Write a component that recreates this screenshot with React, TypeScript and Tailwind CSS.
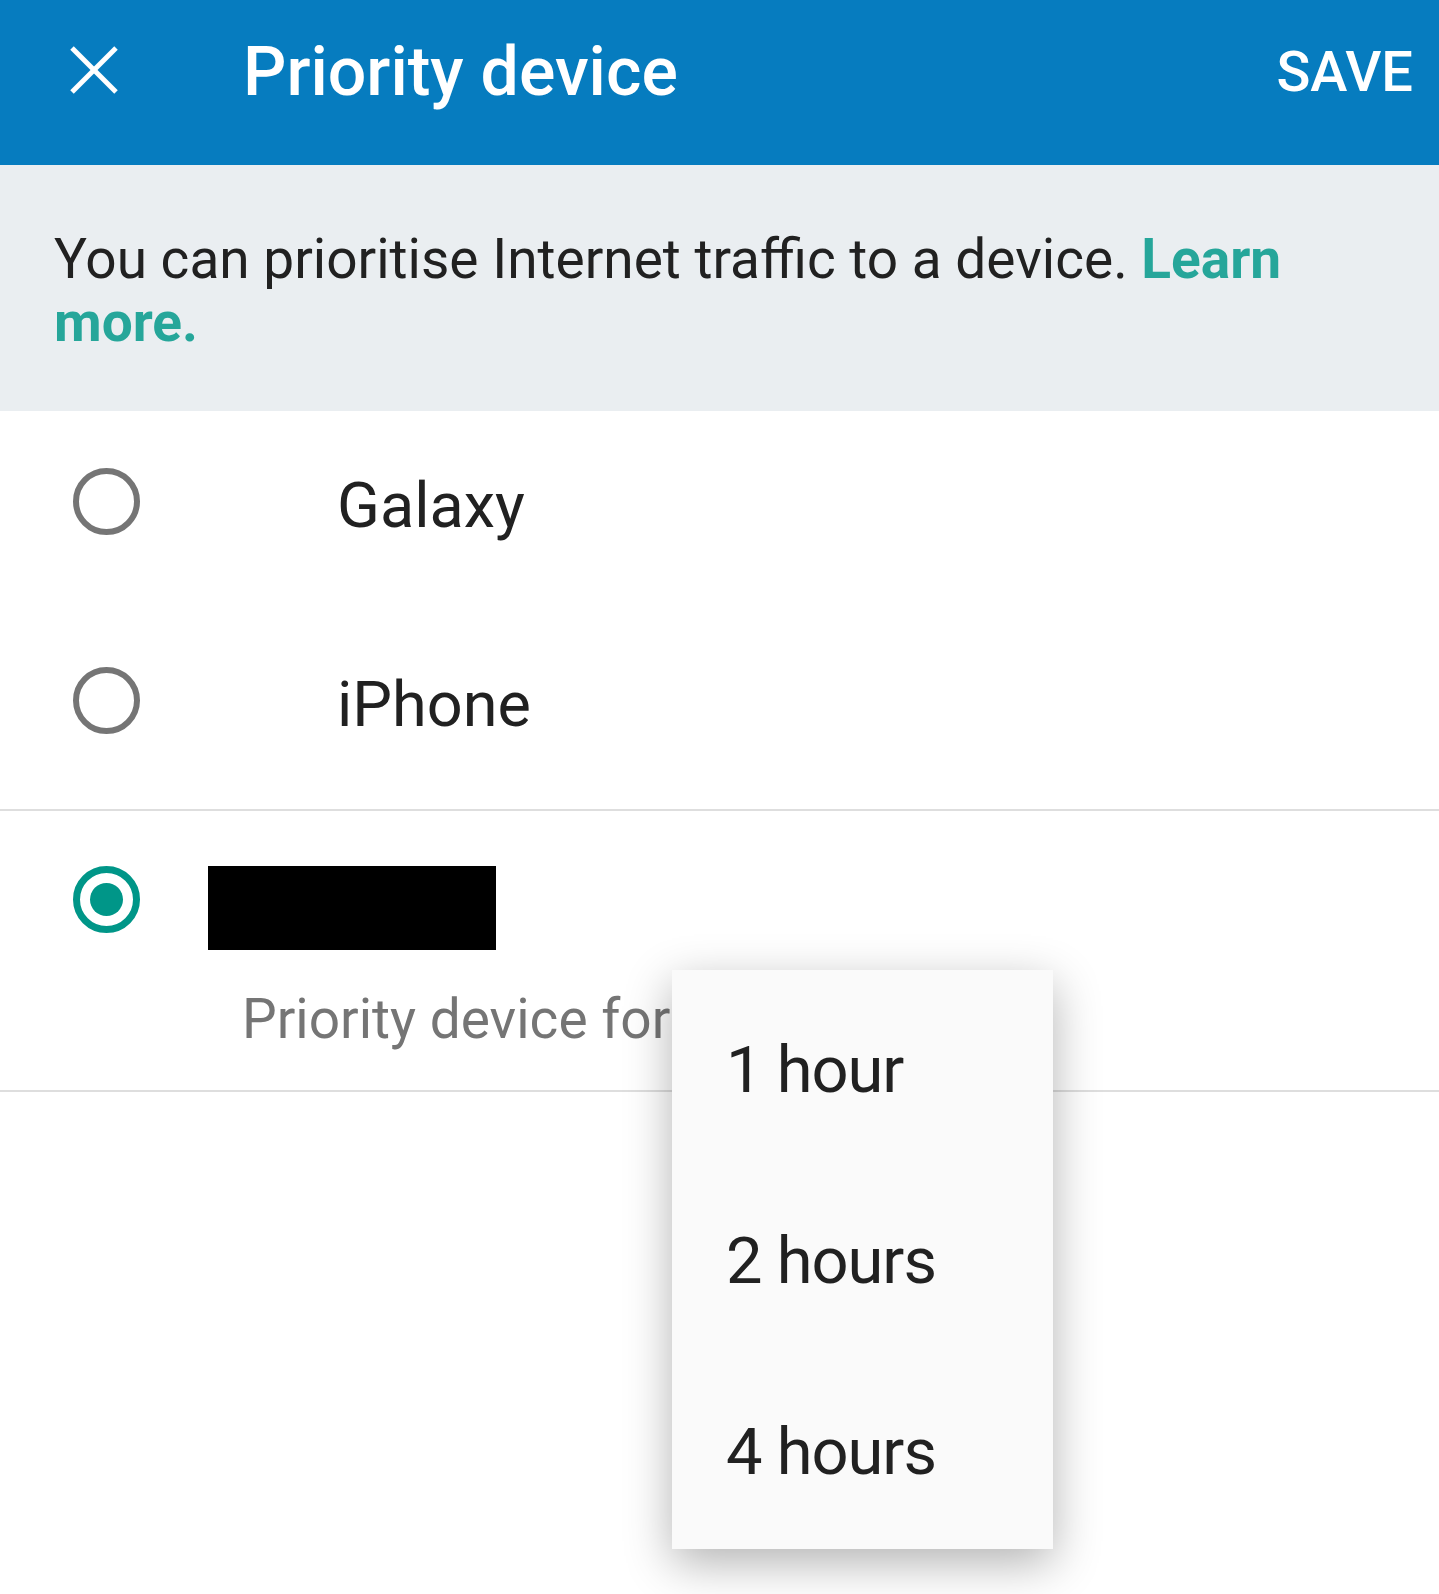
export default function App() {
  return (
    <div className="relative min-h-[1594px] bg-white font-[family-name:Roboto,sans-serif] text-[#212121]">
      {/* app bar */}
      <header className="flex h-[165px] items-start bg-[#067cbf] text-white">
        <svg
          className="ml-[70px] mt-[46px] h-[48px] w-[48px] shrink-0"
          viewBox="0 0 48 48"
          fill="none"
          stroke="white"
          strokeWidth="5"
        >
          <line x1="2" y1="2" x2="46" y2="46" />
          <line x1="46" y1="2" x2="2" y2="46" />
        </svg>
        <h1 className="ml-[125px] mt-[38px] text-[68px] font-medium leading-none">Priority device</h1>
        <button className="ml-auto mr-[26px] mt-[44px] text-[56px] font-medium leading-none">SAVE</button>
      </header>

      {/* info banner */}
      <div className="bg-[#eaeef1] pb-[57px] pl-[54px] pr-[54px] pt-[63px] text-[55px] leading-[63px]">
        You can prioritise Internet traffic to a device.{" "}
        <a className="font-bold text-[#26a69a]">Learn more.</a>
      </div>

      {/* devices */}
      <div className="flex flex-col gap-[132px] pb-[75px] pt-[57px]">
        {["Galaxy", "iPhone"].map((name) => (
          <div key={name} className="flex h-[67px] items-start">
            <span className="ml-[73px] h-[67px] w-[67px] shrink-0 rounded-full border-[6px] border-[#757575]" />
            <span className="ml-[197px] mt-[6px] text-[63px] leading-none">{name}</span>
          </div>
        ))}
      </div>
      <div className="h-[2px] bg-[#dedede]" />

      <div className="pb-[43px] pt-[55px]">
        <div className="flex items-start">
          <span className="ml-[73px] flex h-[67px] w-[67px] shrink-0 items-center justify-center rounded-full border-[7px] border-[#009688]">
            <span className="h-[33px] w-[33px] rounded-full bg-[#009688]" />
          </span>
          <div className="ml-[68px] h-[84px] w-[288px] bg-black" />
        </div>
        <p className="ml-[242px] mt-[42px] text-[55px] leading-none text-[#757575]">Priority device for</p>
      </div>
      <div className="h-[2px] bg-[#dedede]" />

      {/* duration menu */}
      <ul className="absolute left-[672px] top-[970px] h-[579px] w-[381px] bg-[#fafafa] pt-[5px] shadow-[0_14px_44px_rgba(0,0,0,0.3)]">
        {["1 hour", "2 hours", "4 hours"].map((item) => (
          <li key={item} className="h-[191px] pl-[54px] text-[65px] leading-[191px] tracking-[-1px]">
            {item}
          </li>
        ))}
      </ul>
    </div>
  );
}
